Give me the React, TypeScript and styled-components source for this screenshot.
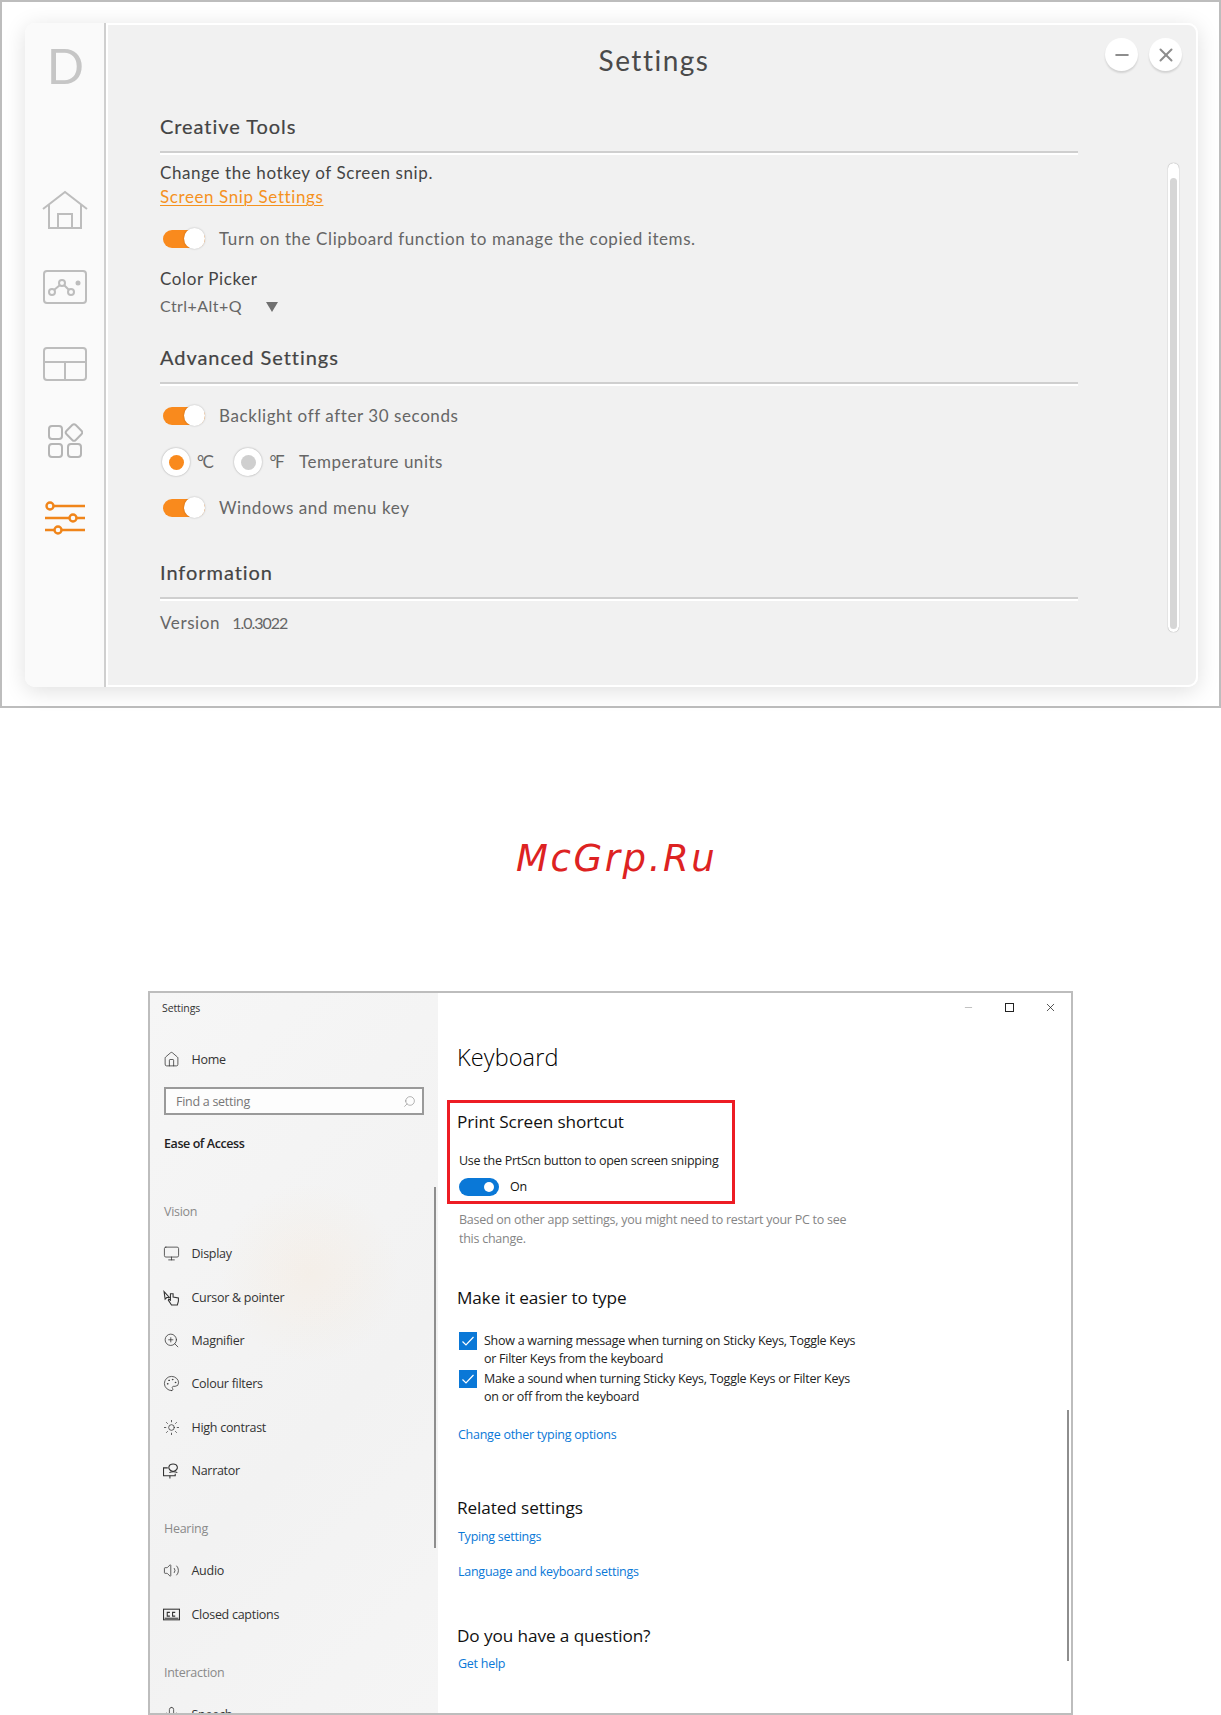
import styled, { createGlobalStyle } from "styled-components";
import { Home, Monitor, ZoomIn, Palette, Sun, Volume2, Search, Minus, X, Mic } from "lucide-react";
import type { ReactNode } from "react";

const GlobalStyle = createGlobalStyle`
    html, body {
        margin: 0;
        padding: 0;
        background: #fff;
    }
    * {
        box-sizing: border-box;
    }
`

const Page = styled.div`
    width: 1221px;
    height: 1715px;
    overflow: hidden;
`

/* ---------- top screenshot: settings app ---------- */

const TopFrame = styled.section`
    height: 708px;
    border: 2px solid #bdbdbd;
    padding: 21px 21px 19px 23px;
    background: #fff;
    font-family: "Lato", sans-serif;
`

const Panel = styled.div`
    position: relative;
    display: flex;
    height: 100%;
    border-radius: 10px;
    box-shadow: 0 4px 22px rgba(0, 0, 0, .13);
`

const Sidebar = styled.nav`
    width: 81px;
    flex-shrink: 0;
    display: flex;
    flex-direction: column;
    align-items: center;
    background: #fafafa;
    border-right: 2px solid #cfcfcf;
    border-radius: 10px 0 0 10px;
`

const Logo = styled.div`
    height: 148.5px;
    padding: 13px 0 0 2px;
    font-size: 49px;
    line-height: 58px;
    font-weight: 400;
    color: #c6c6c6;
`

const SideIcon = styled.div`
    height: 76.9px;
    display: flex;
    align-items: center;
    justify-content: center;
`

const Main = styled.main`
    position: relative;
    flex: 1;
    padding: 0 0 0 52px;
    background: #f1f1f1;
    border: 2px solid #fff;
    border-radius: 0 10px 10px 0;
    color: #555;
`

const Title = styled.h1`
    margin: 0 0 0 -52px;
    height: 52px;
    padding: 18px 0 0 4px;
    text-align: center;
    font-size: 28px;
    line-height: 34px;
    font-weight: 400;
    letter-spacing: 1.5px;
    color: #4a4a4a;
`

const WinButtons = styled.div`
    position: absolute;
    top: 13px;
    right: 14px;
    display: flex;
    gap: 11px;
`

const RoundButton = styled.button`
    width: 33px;
    height: 33px;
    padding: 0;
    display: flex;
    align-items: center;
    justify-content: center;
    border: none;
    border-radius: 50%;
    background: #fff;
    color: #8d8d8d;
    box-shadow: 0 2px 2px rgba(0, 0, 0, .13);
`

const Heading = styled.h2<{ $top: number }>`
    margin: ${p => p.$top - 1}px 0 0;
    height: 26px;
    font-size: 20px;
    line-height: 26px;
    font-weight: 400;
    letter-spacing: .95px;
    color: #444;
    -webkit-text-stroke: .2px #444;
`

const Rule = styled.div`
    width: 918px;
    height: 2px;
    margin-top: 12px;
    background: #cfcfcf;
    box-shadow: 0 2px 0 #fff;
`

const Line = styled.div<{ $top: number; $dark?: boolean }>`
    display: flex;
    align-items: center;
    height: 22px;
    padding-bottom: 3px;
    margin-top: ${p => p.$top}px;
    font-size: 17px;
    letter-spacing: .6px;
    color: ${p => (p.$dark ? "#444" : "#666")};
`

const ShortcutText = styled.span`
    font-size: 16px;
    letter-spacing: .45px;
`

const VersionNumber = styled.span`
    margin-left: 12px;
    font-size: 16px;
    letter-spacing: -1px;
`

const OrangeLink = styled.a`
    color: #f5921e;
    text-decoration: underline;
    text-underline-offset: 2px;
    text-decoration-thickness: 1px;
`

const OptionRow = styled.div<{ $top: number }>`
    display: flex;
    align-items: center;
    height: 24px;
    padding-bottom: 1px;
    margin-top: ${p => p.$top}px;
    font-size: 17px;
    letter-spacing: .58px;
    color: #666;
`

const Toggle = styled.span`
    position: relative;
    width: 42px;
    height: 18px;
    margin: 1px 14px 0 3px;
    flex-shrink: 0;
    border-radius: 9px;
    background: #f98a1d;

    &::after {
        content: "";
        position: absolute;
        right: 0;
        top: -2px;
        width: 21px;
        height: 21px;
        border-radius: 50%;
        background: #fff;
        box-shadow: 0 0 2px rgba(0, 0, 0, .25);
    }
`

const RadioRow = styled.div`
    display: flex;
    align-items: center;
    height: 28px;
    padding-bottom: 1px;
    margin-top: 20px;
    font-size: 17px;
    letter-spacing: .52px;
    color: #666;
`

const Radio = styled.span<{ $on?: boolean }>`
    width: 28px;
    height: 28px;
    margin: 1px 7px 0 ${p => (p.$on ? "2px" : "22px")};
    flex-shrink: 0;
    display: flex;
    align-items: center;
    justify-content: center;
    border-radius: 50%;
    background: #fff;
    box-shadow: 0 0 2px rgba(0, 0, 0, .35);

    &::after {
        content: "";
        width: 15px;
        height: 15px;
        border-radius: 50%;
        background: ${p => (p.$on ? "#f98a1d" : "#cfcfcf")};
    }
`

const Unit = styled.span`
    letter-spacing: -1.5px;
`

const TempLabel = styled.span`
    margin-left: 16px;
`

const Caret = styled.span`
    width: 0;
    height: 0;
    margin: 3px 0 0 24px;
    border-left: 6px solid transparent;
    border-right: 6px solid transparent;
    border-top: 10px solid #707070;
`

const Track = styled.div`
    position: absolute;
    top: 138px;
    right: 17px;
    width: 11px;
    height: 469px;
    padding: 15px 2px 3px;
    background: #fff;
    border-radius: 6px;
    box-shadow: 0 0 1px rgba(0, 0, 0, .5);
`

const Thumb = styled.div`
    height: 100%;
    background: #d6d6d6;
    border-radius: 4px;
`

/* ---------- watermark ---------- */

const Watermark = styled.div`
    height: 283px;
    padding: 127px 0 0 516px;
    font-family: "DejaVu Sans", sans-serif;
    font-style: italic;
    font-size: 37px;
    line-height: 48px;
    letter-spacing: 2.6px;
    color: #dd2222;
`

/* ---------- lower screenshot: windows settings ---------- */

const WinFrame = styled.section`
    display: flex;
    width: 925px;
    height: 724px;
    margin-left: 148px;
    border: 2px solid #bdbdbd;
    overflow: hidden;
    font-family: "Open Sans", sans-serif;
    background: #fff;
`

const WinSide = styled.aside`
    position: relative;
    width: 288px;
    height: 100%;
    flex-shrink: 0;
    padding: 0 0 0 14px;
    background:
        radial-gradient(circle at 160px 280px, rgba(255, 200, 140, .1), rgba(255, 200, 140, 0) 90px),
        linear-gradient(135deg, #f6f6f6, #f2f2f2 60%, #f5f5f5);
    color: #333;
    font-size: 12.5px;
    letter-spacing: -.28px;
`

const AppName = styled.div`
    height: 30px;
    margin-left: -2px;
    line-height: 30px;
    font-size: 10.5px;
    letter-spacing: -.1px;
`

const NavItem = styled.div<{ $top?: number }>`
    display: flex;
    align-items: center;
    gap: 11.5px;
    height: 43.3px;
    margin-top: ${p => p.$top ?? 0}px;
    svg {
        width: 17px;
        height: 17px;
        margin-left: -1px;
        flex-shrink: 0;
    }
`

const SearchBox = styled.div`
    display: flex;
    align-items: center;
    justify-content: space-between;
    width: 260px;
    height: 28px;
    margin-top: 6px;
    padding: 0 6px 0 10px;
    border: 2px solid #9a9a9a;
    background: #fdfdfd;
    color: #777;
`

const SearchGlyph = styled(Search)`
    transform: scaleX(-1);
`

const SideStrong = styled.div`
    height: 24px;
    margin-top: 17px;
    line-height: 24px;
    font-weight: 600;
    color: #222;
    letter-spacing: -.42px;
`

const GroupLabel = styled.div<{ $top: number }>`
    height: 24px;
    margin: ${p => p.$top}px 0 8px;
    line-height: 24px;
    color: #8a8a8a;
`

const PaneScroll = styled.div`
    position: absolute;
    left: 284px;
    top: 194px;
    width: 2px;
    height: 361px;
    background: #8e8e8e;
`

const WinContent = styled.div`
    position: relative;
    flex: 1;
    padding-left: 19px;
    color: #111;
    font-size: 12.5px;
    letter-spacing: -.26px;
`

const TitleBar = styled.div`
    display: flex;
    justify-content: flex-end;
    height: 28px;
    margin-left: -19px;
`

const BarButton = styled.div<{ $faint?: boolean }>`
    width: 41px;
    display: flex;
    align-items: center;
    justify-content: center;
    color: ${p => (p.$faint ? "#777" : "#111")};
`

const MaxGlyph = styled.span`
    width: 9px;
    height: 9px;
    border: 1px solid #222;
`

const PageTitle = styled.h1`
    height: 36px;
    margin: 18px 0 0;
    font-size: 23.5px;
    line-height: 36px;
    font-weight: 300;
    letter-spacing: .1px;
    color: #000;
`

const RedBox = styled.div`
    width: 288px;
    height: 104px;
    margin: 25px 0 0 -10px;
    padding: 7px 0 0 7px;
    border: 3px solid #ed1c24;
`

const SubTitle = styled.h2<{ $top?: number }>`
    height: 24px;
    margin: ${p => p.$top ?? 0}px 0 0;
    font-size: 17.2px;
    line-height: 24px;
    font-weight: 400;
    letter-spacing: -.1px;
`

const BodyText = styled.div<{ $top: number; $muted?: boolean }>`
    margin: ${p => p.$top}px 0 0 2px;
    line-height: 18.5px;
    color: ${p => (p.$muted ? "#858585" : "#222")};
`

const SwitchRow = styled.div`
    display: flex;
    align-items: center;
    gap: 11px;
    height: 18px;
    margin: 7px 0 0 2px;
`

const BlueSwitch = styled.span`
    position: relative;
    width: 40px;
    height: 18px;
    border-radius: 9px;
    background: #0a78d7;

    &::after {
        content: "";
        position: absolute;
        right: 5px;
        top: 4px;
        width: 10px;
        height: 10px;
        border-radius: 50%;
        background: #fff;
    }
`

const CheckRow = styled.div<{ $top: number }>`
    display: flex;
    gap: 7px;
    margin: ${p => p.$top}px 0 0 2px;
    line-height: 17.5px;
    color: #222;
`

const CheckBox = styled.span`
    width: 18px;
    height: 18px;
    flex-shrink: 0;
    display: flex;
    align-items: center;
    justify-content: center;
    background: #0a78d7;
`

const BlueLink = styled.a<{ $top: number }>`
    display: block;
    margin: ${p => p.$top}px 0 0 1px;
    line-height: 18px;
    color: #0a78d7;
`

const ContentScroll = styled.div`
    position: absolute;
    right: 2px;
    top: 417px;
    width: 2px;
    height: 251px;
    background: #8e8e8e;
`

/* ---------- drawings ---------- */

const HouseIcon = () => (
    <svg width="48" height="40" viewBox="0 0 48 40" fill="none" stroke="#bdbdbd" strokeWidth="2">
        <path d="M2 19 24 2l22 17" />
        <path d="M8 15v23h32V15" />
        <path d="M17 38V24h14v14" />
    </svg>
)

const GraphIcon = () => (
    <svg width="44" height="34" viewBox="0 0 44 34" fill="none" stroke="#bdbdbd" strokeWidth="2">
        <rect x="1" y="1" width="42" height="32" rx="3" />
        <circle cx="9" cy="22" r="3" />
        <circle cx="19" cy="13" r="3" />
        <circle cx="28" cy="22" r="3" />
        <path d="m11 20 6-5M21 15l5 5" />
        <circle cx="35" cy="13" r="2.5" fill="#bdbdbd" stroke="none" />
    </svg>
)

const LayoutIcon = () => (
    <svg width="44" height="34" viewBox="0 0 44 34" fill="none" stroke="#bdbdbd" strokeWidth="2">
        <rect x="1" y="1" width="42" height="32" rx="3" />
        <path d="M1 15h42M22 15v18" />
    </svg>
)

const AppsIcon = () => (
    <svg width="36" height="36" viewBox="0 0 36 36" fill="none" stroke="#b5b5b5" strokeWidth="2">
        <rect x="2" y="3" width="13" height="13" rx="3" />
        <rect x="20.5" y="3" width="13" height="13" rx="2.5" transform="rotate(45 27 9.5)" />
        <rect x="2" y="21" width="13" height="13" rx="3" />
        <rect x="21" y="21" width="13" height="13" rx="3" />
    </svg>
)

const SlidersIcon = () => (
    <svg width="40" height="36" viewBox="0 0 40 36" fill="none" stroke="#f0851a" strokeWidth="2.4">
        <path d="M9 6h31M0 18h24M31 18h9M0 30h9M17 30h23" />
        <circle cx="5" cy="6" r="3.5" />
        <circle cx="28" cy="18" r="3.5" />
        <circle cx="13" cy="30" r="3.5" />
    </svg>
)

const CursorHand = () => (
    <svg viewBox="0 0 16 16" fill="none" stroke="#333" strokeWidth="1">
        <path d="M1 2.500 6 8H3.500L2 9.500z" />
        <path d="M7 4.500v6L5.500 9.500 5 10.500 8 15h5.500l1-3.500V8.500l-5-1V4.500z" />
    </svg>
)

const NarratorIcon = () => (
    <svg viewBox="0 0 16 16" fill="none" stroke="#333" strokeWidth="1">
        <path d="M4.500 5.500H.5v7.500h11v-2" />
        <path d="M6 15h1M6.500 13v2" />
        <path d="M5.500 4.500C6.500 1 12.500 1 13.500 4.500c.5 3-2.500 4-4 4.500-1.500-.5-4.500-1.500-4-4.500z" />
        <path d="M6 10c1.500-1 6-1 7.500 0" />
    </svg>
)

const CaptionsIcon = () => (
    <svg viewBox="0 0 16 16" fill="none" stroke="#333" strokeWidth="1">
        <rect x=".5" y="3" width="15" height="10" />
        <path d="M1.500 11.500h13" />
        <path d="M6.500 6H4v3.500h2.500M11.500 6H9v3.500h2.500" />
    </svg>
)

const Tick = () => (
    <svg width="14" height="14" viewBox="0 0 14 14" fill="none" stroke="#fff" strokeWidth="1.2">
        <path d="m1.500 7.500 3.500 3.500 7.500-8" />
    </svg>
)

type NavEntry = { label: string; icon: ReactNode }

const vision: NavEntry[] = [
    { label: "Display", icon: <Monitor strokeWidth={1.1} /> },
    { label: "Cursor & pointer", icon: <CursorHand /> },
    { label: "Magnifier", icon: <ZoomIn strokeWidth={1.1} /> },
    { label: "Colour filters", icon: <Palette strokeWidth={1.1} /> },
    { label: "High contrast", icon: <Sun strokeWidth={1.1} /> },
    { label: "Narrator", icon: <NarratorIcon /> },
]

const hearing: NavEntry[] = [
    { label: "Audio", icon: <Volume2 strokeWidth={1.1} /> },
    { label: "Closed captions", icon: <CaptionsIcon /> },
]

const App = () => {
    return <>
        <GlobalStyle />
        <Page>
            <TopFrame>
                <Panel>
                    <Sidebar>
                        <Logo>D</Logo>
                        <SideIcon><HouseIcon /></SideIcon>
                        <SideIcon><GraphIcon /></SideIcon>
                        <SideIcon><LayoutIcon /></SideIcon>
                        <SideIcon><AppsIcon /></SideIcon>
                        <SideIcon><SlidersIcon /></SideIcon>
                    </Sidebar>
                    <Main>
                        <Title>Settings</Title>
                        <WinButtons>
                            <RoundButton aria-label="Minimize"><Minus size={20} strokeWidth={2.4} /></RoundButton>
                            <RoundButton aria-label="Close"><X size={22} strokeWidth={2.2} /></RoundButton>
                        </WinButtons>

                        <Heading $top={37}>Creative Tools</Heading>
                        <Rule />
                        <Line $top={10} $dark>Change the hotkey of Screen snip.</Line>
                        <Line $top={2}><OrangeLink>Screen Snip Settings</OrangeLink></Line>
                        <OptionRow $top={18}><Toggle />Turn on the Clipboard function to manage the copied items.</OptionRow>
                        <Line $top={18} $dark>Color Picker</Line>
                        <Line $top={5}><ShortcutText>Ctrl+Alt+Q</ShortcutText><Caret /></Line>

                        <Heading $top={27}>Advanced Settings</Heading>
                        <Rule />
                        <OptionRow $top={20}><Toggle />Backlight off after 30 seconds</OptionRow>
                        <RadioRow>
                            <Radio $on /><Unit>°C</Unit>
                            <Radio /><Unit>°F</Unit>
                            <TempLabel>Temperature units</TempLabel>
                        </RadioRow>
                        <OptionRow $top={20}><Toggle />Windows and menu key</OptionRow>

                        <Heading $top={40}>Information</Heading>
                        <Rule />
                        <Line $top={14}>Version<VersionNumber>1.0.3022</VersionNumber></Line>

                        <Track><Thumb /></Track>
                    </Main>
                </Panel>
            </TopFrame>

            <Watermark>McGrp.Ru</Watermark>

            <WinFrame>
                <WinSide>
                    <AppName>Settings</AppName>
                    <NavItem $top={15}><Home strokeWidth={1.1} />Home</NavItem>
                    <SearchBox>Find a setting<SearchGlyph size={13} strokeWidth={1} /></SearchBox>
                    <SideStrong>Ease of Access</SideStrong>

                    <GroupLabel $top={44}>Vision</GroupLabel>
                    {vision.map(item => <NavItem key={item.label}>{item.icon}{item.label}</NavItem>)}

                    <GroupLabel $top={25}>Hearing</GroupLabel>
                    {hearing.map(item => <NavItem key={item.label}>{item.icon}{item.label}</NavItem>)}

                    <GroupLabel $top={25}>Interaction</GroupLabel>
                    <NavItem><Mic strokeWidth={1.1} />Speech</NavItem>

                    <PaneScroll />
                </WinSide>

                <WinContent>
                    <TitleBar>
                        <BarButton $faint><Minus size={11} strokeWidth={1} /></BarButton>
                        <BarButton><MaxGlyph /></BarButton>
                        <BarButton><X size={13} strokeWidth={1.3} /></BarButton>
                    </TitleBar>

                    <PageTitle>Keyboard</PageTitle>

                    <RedBox>
                        <SubTitle>Print Screen shortcut</SubTitle>
                        <BodyText $top={18}>Use the PrtScn button to open screen snipping</BodyText>
                        <SwitchRow><BlueSwitch />On</SwitchRow>
                    </RedBox>

                    <BodyText $top={7} $muted>
                        Based on other app settings, you might need to restart your PC to see<br />this change.
                    </BodyText>

                    <SubTitle $top={38}>Make it easier to type</SubTitle>
                    <CheckRow $top={22}>
                        <CheckBox><Tick /></CheckBox>
                        <span>Show a warning message when turning on Sticky Keys, Toggle Keys<br />or Filter Keys from the keyboard</span>
                    </CheckRow>
                    <CheckRow $top={3}>
                        <CheckBox><Tick /></CheckBox>
                        <span>Make a sound when turning Sticky Keys, Toggle Keys or Filter Keys<br />on or off from the keyboard</span>
                    </CheckRow>
                    <BlueLink $top={21}>Change other typing options</BlueLink>

                    <SubTitle $top={52}>Related settings</SubTitle>
                    <BlueLink $top={8}>Typing settings</BlueLink>
                    <BlueLink $top={17}>Language and keyboard settings</BlueLink>

                    <SubTitle $top={43}>Do you have a question?</SubTitle>
                    <BlueLink $top={7}>Get help</BlueLink>

                    <ContentScroll />
                </WinContent>
            </WinFrame>
        </Page>
    </>
}

export default App;
